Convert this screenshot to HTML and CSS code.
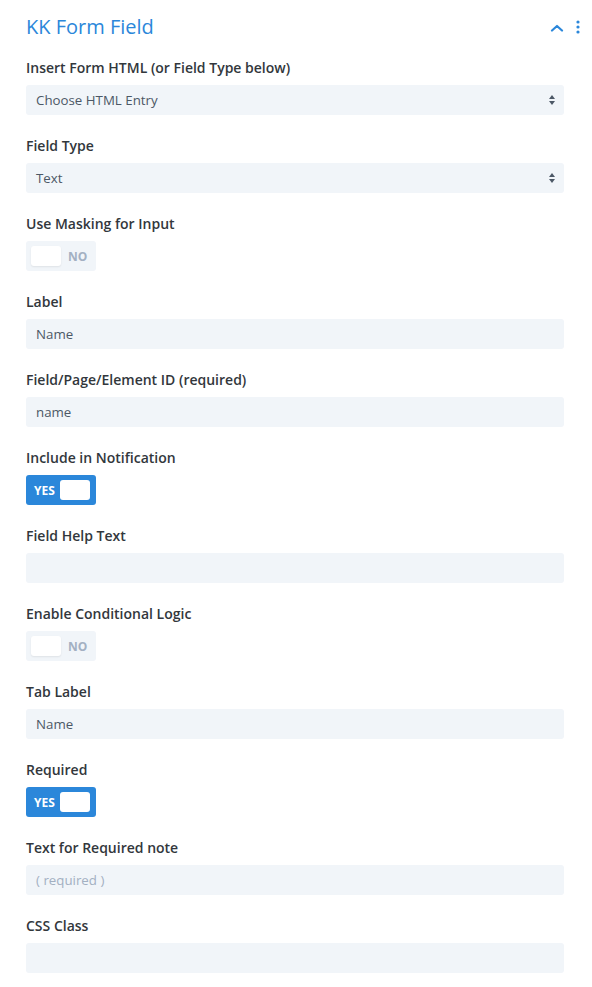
FILE: index.html
```html
<!DOCTYPE html>
<html>
<head>
<meta charset="utf-8">
<link rel="stylesheet" href="styles.css">
</head>
<body>
<div class="panel">
  <div class="header">
    <h1 class="title">KK Form Field</h1>
    <div class="header-icons">
      <svg class="caret" width="14" height="8" viewBox="0 0 14 8"><path d="M2 6.5 L7 2 L12 6.5" fill="none" stroke="#2b87da" stroke-width="2.2" stroke-linecap="round" stroke-linejoin="round"/></svg>
      <svg class="dots" width="4" height="14" viewBox="0 0 4 14"><circle cx="2" cy="2" r="1.6" fill="#2b87da"/><circle cx="2" cy="7" r="1.6" fill="#2b87da"/><circle cx="2" cy="12" r="1.6" fill="#2b87da"/></svg>
    </div>
  </div>

  <div class="field">
    <div class="label">Insert Form HTML (or Field Type below)</div>
    <div class="input select"><span>Choose HTML Entry</span>
      <svg class="arrows" width="8" height="12" viewBox="0 0 8 12"><path d="M4 1 L7 5 L1 5 Z" fill="#4c5866"/><path d="M4 11 L7 7 L1 7 Z" fill="#4c5866"/></svg>
    </div>
  </div>

  <div class="field">
    <div class="label">Field Type</div>
    <div class="input select"><span>Text</span>
      <svg class="arrows" width="8" height="12" viewBox="0 0 8 12"><path d="M4 1 L7 5 L1 5 Z" fill="#4c5866"/><path d="M4 11 L7 7 L1 7 Z" fill="#4c5866"/></svg>
    </div>
  </div>

  <div class="field">
    <div class="label">Use Masking for Input</div>
    <div class="toggle off"><span class="knob"></span><span class="tlabel">NO</span></div>
  </div>

  <div class="field">
    <div class="label">Label</div>
    <div class="input">Name</div>
  </div>

  <div class="field">
    <div class="label">Field/Page/Element ID (required)</div>
    <div class="input">name</div>
  </div>

  <div class="field">
    <div class="label">Include in Notification</div>
    <div class="toggle on"><span class="tlabel">YES</span><span class="knob"></span></div>
  </div>

  <div class="field">
    <div class="label">Field Help Text</div>
    <div class="input"></div>
  </div>

  <div class="field">
    <div class="label">Enable Conditional Logic</div>
    <div class="toggle off"><span class="knob"></span><span class="tlabel">NO</span></div>
  </div>

  <div class="field">
    <div class="label">Tab Label</div>
    <div class="input">Name</div>
  </div>

  <div class="field">
    <div class="label">Required</div>
    <div class="toggle on"><span class="tlabel">YES</span><span class="knob"></span></div>
  </div>

  <div class="field">
    <div class="label">Text for Required note</div>
    <div class="input placeholder">( required )</div>
  </div>

  <div class="field">
    <div class="label">CSS Class</div>
    <div class="input"></div>
  </div>
</div>
</body>
</html>
```

FILE: styles.css
```css
* { box-sizing: border-box; }
html, body { margin: 0; padding: 0; background: #fff; }
body { font-family: "Open Sans", "Noto Sans", sans-serif; color: #32373c; }

.panel { padding: 11px 28px 0 26px; }

.header {
  display: flex;
  align-items: center;
  justify-content: space-between;
  height: 32px;
  margin-bottom: 16px;
}
.title {
  margin: 0;
  font-size: 20px;
  font-weight: 400;
  color: #2b87da;
  line-height: 32px;
}
.header-icons {
  display: flex;
  align-items: center;
  gap: 12px;
  margin-right: -16px;
}
.caret { display: block; margin-top: 2px; }
.dots { display: block; }

.field { margin-bottom: 22px; }
.label {
  font-size: 14px;
  font-weight: 600;
  line-height: 18px;
  color: #32373c;
  margin-bottom: 8px;
}
.input {
  height: 30px;
  background: #f1f5f9;
  border-radius: 3px;
  padding: 0 10px;
  font-size: 13.3px;
  font-weight: 500;
  color: #4c5866;
  display: flex;
  align-items: center;
}
.input.select { justify-content: space-between; padding-right: 8px; }
.input.placeholder { color: #a3b0c2; }
.arrows { display: block; }

.toggle {
  width: 70px;
  height: 30px;
  border-radius: 3px;
  display: flex;
  align-items: center;
  padding: 0 5px;
  font-size: 12px;
  font-weight: 700;
}
.toggle .knob {
  width: 30px;
  height: 20px;
  background: #fff;
  border-radius: 3px;
}
.toggle.off { background: #f1f5f9; }
.toggle.off .knob { box-shadow: 0 1px 2px rgba(0,0,0,0.08); }
.toggle.off .tlabel { color: #a3b0c2; margin-left: 7px; }
.toggle.on { background: #2b87da; }
.toggle.on .tlabel { color: #fff; margin-left: 3px; margin-right: 5px; }
```
